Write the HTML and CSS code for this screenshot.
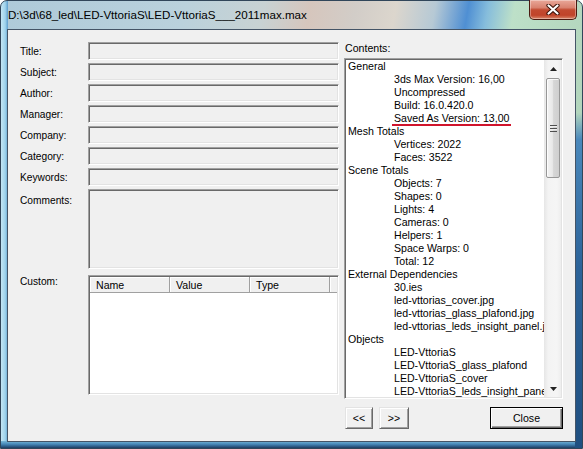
FILE: index.html
```html
<!DOCTYPE html>
<html>
<head>
<meta charset="utf-8">
<title>File Properties</title>
<link rel="stylesheet" href="styles.css">
</head>
<body>
<div class="window">
  <div class="titlebar">
    <span class="title">D:\3d\68_led\LED-VttoriaS\LED-VttoriaS___2011max.max</span>
    <div class="close-x">
      <svg width="14" height="11" viewBox="0 0 14 11">
        <path d="M2.5 1.5 L11.5 9.5 M11.5 1.5 L2.5 9.5" stroke="#3b1208" stroke-width="4.2" stroke-linecap="round" fill="none"/>
        <path d="M2.5 1.5 L11.5 9.5 M11.5 1.5 L2.5 9.5" stroke="#ffffff" stroke-width="2.2" stroke-linecap="round" fill="none"/>
      </svg>
    </div>
  </div>
  <div class="client">
    <div class="form">
      <div class="lbl">Title:</div><div class="field"></div>
      <div class="lbl">Subject:</div><div class="field"></div>
      <div class="lbl">Author:</div><div class="field"></div>
      <div class="lbl">Manager:</div><div class="field"></div>
      <div class="lbl">Company:</div><div class="field"></div>
      <div class="lbl">Category:</div><div class="field"></div>
      <div class="lbl">Keywords:</div><div class="field"></div>
      <div class="lbl lbl-top">Comments:</div><div class="field"></div>
      <div class="lbl lbl-custom">Custom:</div>
      <div class="listview">
        <div class="lv-head">
          <span class="lv-col">Name</span>
          <span class="lv-col">Value</span>
          <span class="lv-col">Type</span>
          <span class="lv-fill"></span>
        </div>
      </div>
    </div>
    <div class="right">
      <div class="contents-label">Contents:</div>
      <div class="contents-box">
        <div class="tree">
          <div class="node">General</div>
          <div class="node child">3ds Max Version: 16,00</div>
          <div class="node child">Uncompressed</div>
          <div class="node child">Build: 16.0.420.0</div>
          <div class="node child"><span class="marked">Saved As Version: 13,00</span></div>
          <div class="node">Mesh Totals</div>
          <div class="node child">Vertices: 2022</div>
          <div class="node child">Faces: 3522</div>
          <div class="node">Scene Totals</div>
          <div class="node child">Objects: 7</div>
          <div class="node child">Shapes: 0</div>
          <div class="node child">Lights: 4</div>
          <div class="node child">Cameras: 0</div>
          <div class="node child">Helpers: 1</div>
          <div class="node child">Space Warps: 0</div>
          <div class="node child">Total: 12</div>
          <div class="node">External Dependencies</div>
          <div class="node child">30.ies</div>
          <div class="node child">led-vttorias_cover.jpg</div>
          <div class="node child">led-vttorias_glass_plafond.jpg</div>
          <div class="node child">led-vttorias_leds_insight_panel.jpg</div>
          <div class="node">Objects</div>
          <div class="node child">LED-VttoriaS</div>
          <div class="node child">LED-VttoriaS_glass_plafond</div>
          <div class="node child">LED-VttoriaS_cover</div>
          <div class="node child">LED-VttoriaS_leds_insight_panel</div>
        </div>
        <div class="vscroll">
          <div class="sb-btn">
            <svg width="7" height="4" viewBox="0 0 7 4"><path d="M3.5 0 L7 4 L0 4 Z" fill="#222"/></svg>
          </div>
          <div class="sb-thumb">
            <span class="grip"></span>
          </div>
          <div class="sb-track"></div>
          <div class="sb-btn">
            <svg width="7" height="4" viewBox="0 0 7 4"><path d="M0 0 L7 0 L3.5 4 Z" fill="#222"/></svg>
          </div>
        </div>
      </div>
      <div class="buttons">
        <div class="btn btn-prev">&lt;&lt;</div>
        <div class="btn btn-next">&gt;&gt;</div>
        <div class="btn btn-close">Close</div>
      </div>
    </div>
  </div>
</div>
</body>
</html>
```
FILE: styles.css
```css
* {
  box-sizing: border-box;
  margin: 0;
  padding: 0;
}

html, body {
  width: 583px;
  height: 449px;
  overflow: hidden;
}

body {
  font-family: "Liberation Sans", Arial, sans-serif;
  font-size: 10.6px;
  color: #000;
  background: #ffffff;
}

.window {
  width: 583px;
  height: 449px;
  border: 1px solid #31465a;
  border-radius: 7px 7px 0 0;
  display: flex;
  flex-direction: column;
  background:
    linear-gradient(to bottom, rgba(60,120,175,0) 0, rgba(60,120,175,0) 25%, #4a88bb 31%, #2c6399 60%, #1f4f80 100%) right top / 7px 100% no-repeat,
    linear-gradient(to bottom, #78b8d8 0, #4688b9 45%, #1c3d64 100%) left bottom / 100% 7px no-repeat,
    linear-gradient(to right, #c4e6f5 0, #9fd3ec 60%, #5d9ccc 100%) left top / 7px 100% no-repeat,
    linear-gradient(100deg, #aecad9 0%, #bad1dc 28%, #c8d2d3 40%, #d6c6bd 47%, #d2cdc8 54%, #dcd6cd 60%, #b6c9d5 66%, #4f8fd3 71%, #86bddc 74%, #bde0c8 78%, #b3d6bd 90%, #a0c3b1 100%);
}

.titlebar {
  height: 28px;
  display: flex;
  align-items: flex-start;
}

.title {
  padding: 7px 0 0 7px;
  font-size: 11.6px;
  line-height: 14px;
  color: #000;
  white-space: nowrap;
}

.close-x {
  margin-left: auto;
  margin-right: 5px;
  margin-top: -1px;
  width: 48px;
  height: 20px;
  border: 1px solid #4a1a10;
  border-top: none;
  border-radius: 0 0 5px 5px;
  background: linear-gradient(to bottom, #e9a899 0%, #d9826f 40%, #c24a30 52%, #c0442a 80%, #d9876a 100%);
  box-shadow: inset 0 0 0 1px rgba(255,255,255,0.35);
  display: flex;
  align-items: center;
  justify-content: center;
}

.client {
  height: 413px;
  margin: 0 6px;
  border: 1px solid #445466;
  background: #f0f0f0;
  padding: 12px;
  display: flex;
  align-items: flex-start;
  gap: 5px;
}

.form {
  width: 319px;
  display: grid;
  grid-template-columns: 68px 251px;
  grid-template-rows: repeat(7, 18px) 80px 123px;
  row-gap: 3px;
}

.lbl {
  display: flex;
  align-items: center;
  white-space: nowrap;
  line-height: 13px;
  font-size: 10.2px;
}

.lbl-top {
  align-items: flex-start;
  padding-top: 5px;
}

.lbl-custom {
  align-items: flex-start;
  margin-top: 3px;
}

.field {
  background: #f0f0f0;
  border: 1px solid;
  border-color: #a0a0a0 #ffffff #ffffff #a0a0a0;
  box-shadow: inset 1px 1px #696969, inset -1px -1px #e3e3e3;
}

.listview {
  margin-top: 3px;
  background: #ffffff;
  border: 1px solid;
  border-color: #a0a0a0 #ffffff #ffffff #a0a0a0;
  box-shadow: inset 1px 1px #696969, inset -1px -1px #e3e3e3;
  padding: 1px;
}

.lv-head {
  display: flex;
  height: 16px;
}

.lv-col {
  width: 80px;
  padding-left: 6px;
  line-height: 16px;
  background: #f0f0f0;
  box-shadow: inset -1px -1px #a0a0a0, inset 1px 1px #ffffff;
}

.lv-fill {
  flex: 1;
  background: #f0f0f0;
  box-shadow: inset 0 -1px #a0a0a0, inset 1px 1px #ffffff;
}

.right {
  width: 219px;
  display: flex;
  flex-direction: column;
}

.contents-label {
  height: 16px;
  line-height: 12px;
  padding-left: 1px;
}

.contents-box {
  height: 341px;
  background: #ffffff;
  border: 1px solid;
  border-color: #a0a0a0 #ffffff #ffffff #a0a0a0;
  box-shadow: inset 1px 1px #696969, inset -1px -1px #e3e3e3;
  padding: 1px;
  display: flex;
  overflow: hidden;
}

.tree {
  flex: 1;
  min-width: 0;
  overflow: hidden;
  white-space: nowrap;
  padding-left: 2px;
}

.node {
  height: 13px;
  line-height: 13px;
}

.child {
  padding-left: 46px;
}

.marked {
  position: relative;
}

.marked::after {
  content: "";
  position: absolute;
  left: -2px;
  right: -2px;
  bottom: -2px;
  height: 2px;
  background: #d0142c;
}

.vscroll {
  width: 17px;
  display: flex;
  flex-direction: column;
  background: linear-gradient(to right, #e6e6e6 0, #f3f3f3 25%, #f5f5f5 75%, #eeeeee 100%);
}

.sb-btn {
  height: 17px;
  display: flex;
  align-items: center;
  justify-content: center;
  padding-left: 2px;
}

.sb-thumb {
  height: 100px;
  margin: 1px 1px 0 2px;
  border: 1px solid #979797;
  border-radius: 2px;
  background: linear-gradient(to right, #f4f4f4 0, #e8e8e8 45%, #d6d6d6 55%, #cfcfcf 100%);
  box-shadow: inset 1px 1px rgba(255,255,255,0.8);
  display: flex;
  align-items: center;
  justify-content: center;
}

.grip {
  width: 7px;
  height: 7px;
  background: repeating-linear-gradient(to bottom, #4e4e4e 0, #4e4e4e 1px, #eeeeee 1px, #eeeeee 2px, transparent 2px, transparent 3px);
}

.sb-track {
  flex: 1;
}

.buttons {
  margin-top: 8px;
  height: 22px;
  display: flex;
}

.btn {
  height: 22px;
  line-height: 20px;
  text-align: center;
  background: #f0f0f0;
  border: 1px solid;
  border-color: #e3e3e3 #696969 #696969 #e3e3e3;
  box-shadow: inset 1px 1px #ffffff, inset -1px -1px #a0a0a0;
}

.btn-prev {
  width: 28px;
  margin-left: 1px;
}

.btn-next {
  width: 30px;
  margin-left: 6px;
}

.btn-close {
  width: 73px;
  margin-left: auto;
  border-color: #000000;
  box-shadow: inset 1px 1px #ffffff, inset -1px -1px #696969, inset -2px -2px #a0a0a0;
}
```
